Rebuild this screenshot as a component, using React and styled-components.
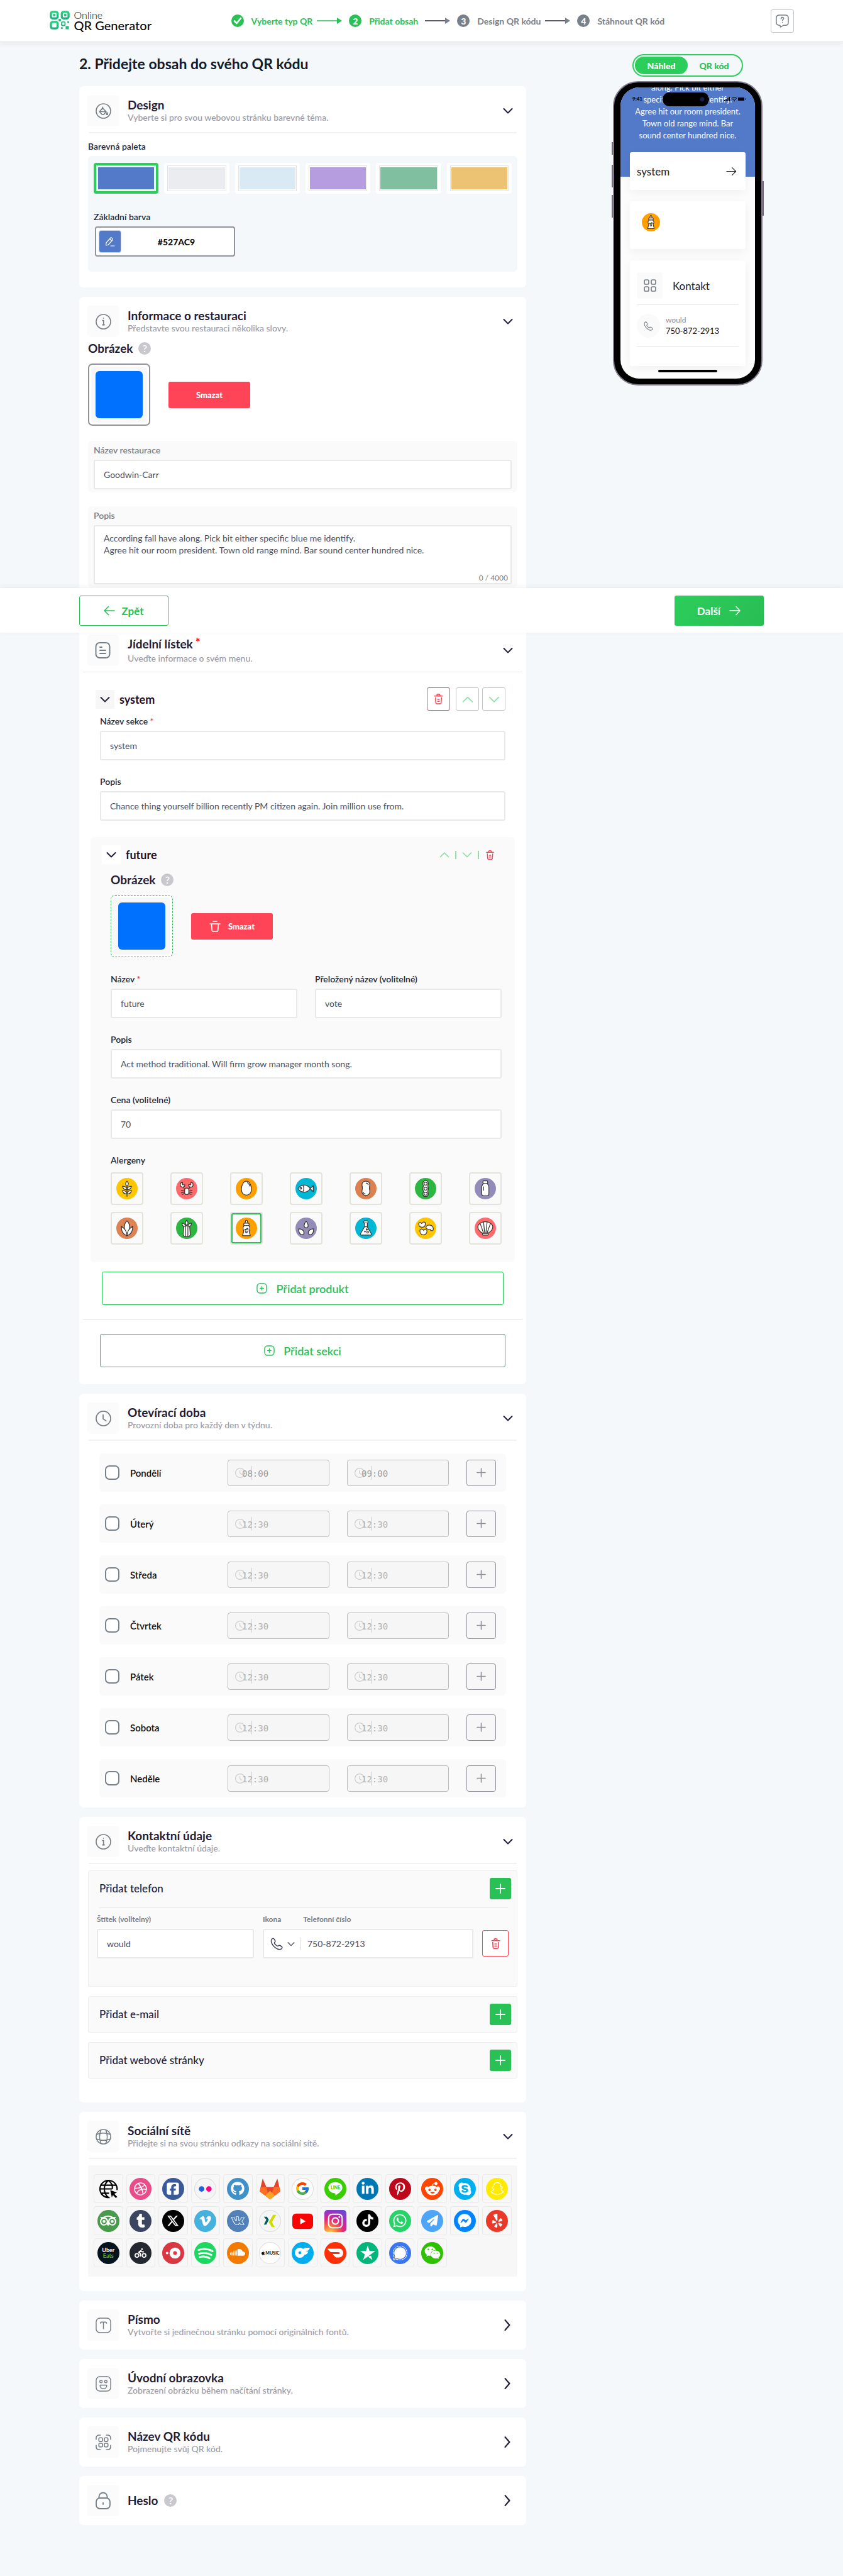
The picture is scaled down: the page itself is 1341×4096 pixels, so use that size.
import React, { useId } from "react";
import styled, { createGlobalStyle, css } from "styled-components";
import {
  FaDribbble, FaSquareFacebook, FaGithub, FaLinkedinIn, FaPinterestP, FaRedditAlien, FaSkype,
  FaSnapchat, FaTumblr, FaXTwitter, FaVimeoV, FaInstagram, FaTiktok, FaWhatsapp,
  FaPaperPlane, FaFacebookMessenger, FaYelp, FaPersonBiking, FaSoundcloud, FaApple, FaWeixin,
} from "react-icons/fa6";
import { SiTripadvisor, SiOnlyfans, SiDoordash, SiTrustpilot, SiSignal } from "react-icons/si";
import { SlSocialVkontakte } from "react-icons/sl";
import { FcGoogle } from "react-icons/fc";

const c = {
  page: "#f4f8fb", ink: "#1f1d38", text: "#222938", muted: "#9b9ba5", grey: "#7a8087",
  green: "#29c155", lime: "#2cce5b", red: "#ff4457", soft: "#fafafa", line: "#e9e9e9",
};

const Global = createGlobalStyle`
  * { box-sizing: border-box; }
  body { margin: 0; background: ${c.page}; color: ${c.ink}; font-family: Lato, "Open Sans", "Liberation Sans", sans-serif; font-size: 14px; }
  button, input, textarea { font: inherit; color: inherit; margin: 0; }
  button { cursor: pointer; }
  h1, h2, h3, p { margin: 0; }
  svg { display: block; flex: none; }
`;

/* ---------- layout ---------- */
const TopBar = styled.header`
  background: #fff;
  border-bottom: 1px solid #e0e4e4;
  box-shadow: 0 2px 8px rgba(0, 0, 0, 0.07);
  position: relative;
`;
const TopInner = styled.div`
  max-width: 1184px;
  height: 66px;
  margin: 0 auto;
  display: flex;
  align-items: center;
`;
const Logo = styled.a`
  display: flex;
  gap: 7px;
  color: #0b0b0b;
  text-decoration: none;
  width: 160px;
`;
const LogoText = styled.span`
  display: flex;
  flex-direction: column;
  font-size: 20px;
  line-height: 18px;
  font-weight: 500;
  white-space: nowrap;
`;
const LogoTop = styled.span`
  font-size: 16px;
  line-height: 14px;
  font-weight: 300;
`;
const Steps = styled.ol`
  list-style: none;
  margin: 0 0 0 129px;
  padding: 0;
  display: flex;
  align-items: center;
  gap: 11px;
  font-size: 14px;
  font-weight: 700;
`;
const Step = styled.li`
  display: flex;
  align-items: center;
  color: ${(p) => (p.$on ? c.green : c.grey)};
`;
const Dot = styled.span`
  width: 20px;
  height: 20px;
  margin-right: 12px;
  border-radius: 50%;
  display: grid;
  place-items: center;
  color: #fff;
  font-weight: 900;
  background: ${(p) => (p.$on ? c.green : "#78808a")};
`;
const StepName = styled.span`
  min-width: ${(p) => p.$w}px;
  margin-right: 7px;
`;
const HelpButton = styled.button`
  width: 37px;
  height: 37px;
  margin-left: auto;
  border: 1px solid #c3c6c9;
  border-radius: 3px;
  background: #fff;
  color: ${c.grey};
  display: grid;
  place-items: center;
  padding: 0;
`;
const Wrap = styled.div`
  max-width: 1089px;
  margin: 0 auto;
  display: flex;
  justify-content: space-between;
  align-items: flex-start;
`;
const Column = styled.section`
  flex: 0 1 711px;
  display: flex;
  flex-direction: column;
  gap: 15px;
  padding: ${(p) => p.$pad || 0};
`;
const Title = styled.h1`
  font-size: 23px;
  line-height: 28px;
  font-weight: 700;
  color: #131a29;
  margin-bottom: 7px;
`;
const Side = styled.aside`
  width: 242px;
  padding-top: 19px;
  display: flex;
  flex-direction: column;
  align-items: center;
  gap: 7px;
`;
const ActionBar = styled.div`
  background: #fff;
  box-shadow: 0 -2px 8px rgba(0, 0, 0, 0.06);
  position: relative;
`;
const ActionInner = styled(Wrap)`
  height: 71px;
  padding: 12px 0 11px;
`;
const NavButton = styled.button`
  width: 142px;
  height: 48px;
  border-radius: 3px;
  font-size: 17px;
  font-weight: 700;
  display: flex;
  align-items: center;
  justify-content: center;
  gap: ${(p) => (p.$solid ? 13 : 10)}px;
  border: ${(p) => (p.$solid ? "0" : `1px solid ${c.green}`)};
  color: ${(p) => (p.$solid ? "#fff" : c.green)};
  background: ${(p) => (p.$solid ? `linear-gradient(135deg, ${c.lime}, #28bd53)` : "#fff")};
`;

/* ---------- cards ---------- */
const CardBox = styled.article`
  background: #fff;
  border-radius: ${(p) => (p.$cut === "bottom" ? "7px 7px 0 0" : p.$cut === "top" ? "0 0 7px 7px" : "7px")};
  padding: ${(p) => (p.$cut === "top" ? 3 : 14)}px 0 ${(p) => p.$bottom}px;
`;
const CardHead = styled.button`
  width: 100%;
  border: 0;
  background: none;
  text-align: left;
  display: flex;
  align-items: center;
  padding: 0 21px 0 13px;
`;
const IconBox = styled.span`
  width: 50px;
  height: 50px;
  margin-right: 14px;
  border-radius: 5px;
  background: #fbfbfb;
  color: #767e86;
  display: grid;
  place-items: center;
`;
const HeadText = styled.span`
  flex: 1;
  display: flex;
  flex-direction: column;
  gap: ${(p) => (p.$loose ? 3 : 0)}px;
`;
const HeadTitle = styled.span`
  font-size: 19px;
  line-height: 22px;
  font-weight: 700;
  color: ${c.ink};
  display: flex;
  align-items: center;
  gap: ${(p) => p.$gap || 4}px;
`;
const HeadDesc = styled.span`
  font-size: 14px;
  line-height: 18px;
  font-weight: 500;
  color: ${c.muted};
`;
const HeadStar = styled.span`
  color: #ee1c2e;
  align-self: flex-start;
  line-height: 16px;
`;
const Rule = styled.hr`
  border: 0;
  height: ${(p) => (p.$thin ? 1 : 2)}px;
  background: ${(p) => (p.$thin ? "#e6e7e8" : "#f2f2f3")};
  margin: ${(p) => p.$m};
`;
const Help = styled.span`
  width: 20px;
  height: 20px;
  border-radius: 50%;
  background: #c9c9cd;
  color: #fff;
  font-size: 16px;
  line-height: 20px;
  font-weight: 500;
  text-align: center;
`;
const Body = styled.div`
  padding: ${(p) => p.$pad};
`;

/* ---------- fields ---------- */
const Label = styled.label`
  display: block;
  font-size: ${(p) => (p.$small ? 12 : 14)}px;
  line-height: 18px;
  font-weight: ${(p) => (p.$small ? 700 : 600)};
  color: ${(p) => (p.$grey ? c.grey : c.text)};
  margin-bottom: 6px;
`;
const Star = styled.span`
  color: #ee3347;
`;
const boxed = css`
  width: 100%;
  border: 2px solid ${c.line};
  border-radius: 3px;
  background: #fff;
  color: #4a5060;
  font-size: 14px;
  outline: 0;
  display: block;
`;
const TextInput = styled.input`
  ${boxed}
  height: 47px;
  padding: 0 14px;
`;
const TextArea = styled.textarea`
  ${boxed}
  height: 94px;
  padding: 9px 14px;
  line-height: 19px;
  resize: none;
`;
const FieldBox = styled.div`
  flex: 1;
`;
const Group = styled.div`
  background: ${c.soft};
  border-radius: 6px;
  padding: 6px 9px 5px;
  margin-bottom: ${(p) => (p.$last ? 0 : 22)}px;
  position: relative;
`;
const Counter = styled.span`
  position: absolute;
  right: 15px;
  bottom: 7px;
  font-size: 12px;
  line-height: 16px;
  color: #7a7a80;
`;
const Stack = styled.div`
  display: flex;
  flex-direction: column;
  gap: 25px;
`;
const Pair = styled.div`
  display: flex;
  gap: 28px;
`;

/* ---------- design ---------- */
const PaletteBox = styled.div`
  background: ${c.page};
  border-radius: 6px;
  padding: 11px 9px 24px;
`;
const Swatches = styled.div`
  display: grid;
  grid-template-columns: repeat(6, 1fr);
  gap: 9px;
  margin-bottom: 28px;
`;
const Swatch = styled.button`
  height: 49px;
  border: ${(p) => (p.$on ? `4px solid ${c.lime}` : "4px solid #fff")};
  border-radius: 4px;
  background: #fff;
  padding: 0 1px;
`;
const SwatchColor = styled.span`
  display: block;
  height: 41px;
  border: 1px solid #e4e4e8;
  padding: 2px 1px;
  background: ${(p) => p.$c} content-box;
`;
const ColorRow = styled.div`
  width: 223px;
  height: 48px;
  margin-left: 2px;
  padding: 4px;
  border: 2px solid #92929b;
  border-radius: 4px;
  background: #fff;
  display: flex;
  align-items: center;
`;
const ColorChip = styled.button`
  width: 36px;
  height: 36px;
  border: 1px solid #c9d3e6;
  border-radius: 4px;
  background: #527ac9;
  display: grid;
  place-items: center;
  padding: 0;
`;
const ColorText = styled.input`
  flex: 1;
  min-width: 0;
  border: 0;
  outline: 0;
  background: none;
  text-align: center;
  font-size: 14px;
  font-weight: 900;
  color: #0b0b0b;
`;

/* ---------- images ---------- */
const SubTitle = styled.h3`
  font-size: 19px;
  line-height: 22px;
  font-weight: 700;
  display: flex;
  align-items: center;
  gap: 9px;
  margin-bottom: 13px;
`;
const ImageRow = styled.div`
  display: flex;
  align-items: center;
  gap: 29px;
  margin-bottom: ${(p) => (p.$dashed ? 26 : 24)}px;
`;
const Frame = styled.div`
  width: 99px;
  height: 99px;
  padding: 3px;
  border: ${(p) => (p.$dashed ? `1px dashed ${c.green}` : "2px solid #92929b")};
  border-radius: 7px;
  background: #fff;
`;
const FrameMat = styled.div`
  height: 100%;
  background: #f7f7f7;
  border-radius: 5px;
  display: grid;
  place-items: center;
`;
const Photo = styled.div`
  width: 75px;
  height: 75px;
  border-radius: 6px;
  background: #0070ff;
`;
const RemoveButton = styled.button`
  width: 130px;
  height: 42px;
  border: 0;
  border-radius: 3px;
  background: ${c.red};
  color: #fff;
  font-size: 13px;
  font-weight: 900;
  display: flex;
  align-items: center;
  justify-content: center;
  gap: 12px;
`;

/* ---------- menu ---------- */
const Row = styled.div`
  display: flex;
  align-items: center;
`;
const Fold = styled.button`
  width: 30px;
  height: 30px;
  border: 0;
  padding: 0;
  background: ${(p) => (p.$white ? "#fff" : "#f7f7f7")};
  color: ${c.ink};
  display: grid;
  place-items: center;
`;
const RowTitle = styled.h3`
  flex: 1;
  font-size: 18px;
  line-height: 22px;
  font-weight: 700;
  color: #230f26;
  padding-left: 8px;
`;
const Tool = styled.button`
  width: 37px;
  height: 37px;
  margin-left: ${(p) => p.$gap || 0}px;
  border: 1px solid currentColor;
  border-radius: 3px;
  padding: 0;
  background: #fff;
  color: ${(p) => (p.$red ? c.red : "#95dfaa")};
  display: grid;
  place-items: center;
`;
const MiniTools = styled.div`
  display: flex;
  align-items: center;
  gap: 9px;
  color: #8fdda6;
`;
const Mini = styled.button`
  border: 0;
  background: none;
  padding: 0;
  color: ${(p) => (p.$red ? c.red : "inherit")};
`;
const Bar = styled.span`
  width: 2px;
  height: 13px;
  background: currentColor;
`;
const Product = styled.section`
  margin: 26px 18px 0;
  padding: 13px 0 28px;
  border-radius: 6px;
  background: ${c.soft};
`;
const Allergens = styled.div`
  display: flex;
  flex-direction: column;
  gap: 11px;
  margin-top: 10px;
`;
const AllergenRow = styled.div`
  display: flex;
  justify-content: space-between;
`;
const Tile = styled.button`
  width: 52px;
  height: 52px;
  padding: 0;
  border: 2px solid #e4e4dd;
  border-radius: 4px;
  background: ${c.soft};
  display: grid;
  place-items: center;
  box-shadow: ${(p) => (p.$on ? `inset 0 0 0 2px ${c.green}` : "none")};
`;
const AddButton = styled.button`
  height: 53px;
  margin: ${(p) => p.$m};
  border: 1px solid ${c.green};
  border-radius: 3px;
  background: #fff;
  color: ${c.green};
  font-size: 18px;
  font-weight: 600;
  display: flex;
  align-items: center;
  justify-content: center;
  gap: 14px;
`;
const Flow = styled.div`
  display: flex;
  flex-direction: column;
`;

/* ---------- opening hours ---------- */
const Days = styled.div`
  display: flex;
  flex-direction: column;
  gap: 20px;
  padding: 20px 32px 0;
`;
const Day = styled.div`
  height: 61px;
  border-radius: 6px;
  background: ${c.soft};
  display: flex;
  align-items: center;
  padding: 0 16px 0 9px;
`;
const DayName = styled.label`
  flex: 1;
  display: flex;
  align-items: center;
  gap: 17px;
  font-size: 15px;
  font-weight: 600;
  color: #101010;
`;
const Check = styled.input`
  appearance: none;
  width: 23px;
  height: 23px;
  border: 2px solid #79818a;
  border-radius: 7px;
  background: #fff;
`;
const TimeBox = styled.div`
  flex: 0 1 162px;
  height: 42px;
  margin-right: 28px;
  border: 1px solid #b9bbbe;
  border-radius: 4px;
  background: #f6f6f6;
  position: relative;
`;
const TimeMark = styled.span`
  position: absolute;
  left: 11px;
  top: 9px;
  display: flex;
  align-items: center;
  gap: 10px;
  color: #cfcfcf;
`;
const TimeRule = styled.i`
  width: 1px;
  height: 22px;
  background: #cfcfcf;
`;
const TimeInput = styled.input`
  position: relative;
  width: 100%;
  height: 40px;
  border: 0;
  padding: 2px 0 0 22px;
  background: none;
  font-family: "DejaVu Sans Mono", "Liberation Mono", monospace;
  font-size: 14px;
  color: ${(p) => (p.$set ? "#9c9c9c" : "#b2b2b2")};
`;
const PlusBox = styled.button`
  width: 47px;
  height: 42px;
  border: 1px solid #8f9098;
  border-radius: 4px;
  background: #f7f7f8;
  color: #8f9098;
  display: grid;
  place-items: center;
  padding: 0;
`;

/* ---------- contact ---------- */
const Panels = styled.div`
  display: flex;
  flex-direction: column;
  gap: 15px;
  padding: 10px 14px 0;
`;
const Panel = styled.section`
  border: 1px solid #ededee;
  border-radius: 3px;
  background: ${c.soft};
  padding: 11px 9px 11px 17px;
`;
const PanelTitle = styled.h3`
  flex: 1;
  font-size: 17px;
  line-height: 22px;
  font-weight: 500;
`;
const GreenPlus = styled.button`
  width: 34px;
  height: 34px;
  border: 0;
  border-radius: 3px;
  background: ${c.green};
  color: #fff;
  display: grid;
  place-items: center;
  padding: 0;
`;
const PhoneRow = styled.div`
  display: flex;
  align-items: flex-end;
  gap: 14px;
  padding: 9px 4px 33px 0;
  margin-left: -4px;
`;
const NumberField = styled.div`
  flex: 0 1 335px;
`;
const NumberLabels = styled.div`
  display: flex;
  gap: 35px;
`;
const NumberBox = styled.div`
  ${boxed}
  height: 47px;
  display: flex;
  align-items: center;
  padding-left: 10px;
`;
const IconPick = styled.button`
  border: 0;
  border-right: 1px solid #dcdcdc;
  background: none;
  padding: 0 9px 0 0;
  display: flex;
  align-items: center;
  gap: 7px;
  color: #3f4555;
`;
const Bare = styled.input`
  border: 0;
  outline: 0;
  background: none;
  flex: 1;
  min-width: 0;
  padding-left: 10px;
`;
const BinButton = styled(Tool)`
  width: 42px;
  height: 42px;
  margin-bottom: 3px;
`;

/* ---------- social ---------- */
const SocialGrid = styled.div`
  margin: 10px 14px 0;
  padding: 14px 9px 15px;
  border-radius: 3px;
  background: #f7f7f7;
  display: grid;
  grid-template-columns: repeat(13, 1fr);
  gap: 5px;
`;
const SocialTile = styled.button`
  height: 46px;
  border: 1px solid #ebebeb;
  border-radius: 4px;
  background: none;
  padding: 0;
  display: grid;
  place-items: center;
`;
const Badge = styled.span`
  width: 35px;
  height: 35px;
  border-radius: ${(p) => (p.$square ? "5px" : "50%")};
  background: ${(p) => p.$bg};
  color: ${(p) => p.$fg || "#fff"};
  box-shadow: ${(p) => (p.$ring ? "inset 0 0 0 1px #dcdcdc" : "none")};
  display: flex;
  flex-direction: ${(p) => (p.$col ? "column" : "row")};
  align-items: center;
  justify-content: center;
  font-size: ${(p) => (p.$col ? 9 : 7)}px;
  line-height: 9px;
  font-weight: 700;
`;
const Lime = styled.span`
  color: #5fb709;
`;

/* ---------- phone preview ---------- */
const Toggle = styled.div`
  width: 176px;
  height: 36px;
  border: 2px solid ${c.lime};
  border-radius: 18px;
  padding: 2px;
  display: flex;
`;
const ToggleItem = styled.button`
  flex: 1;
  border: 0;
  border-radius: 14px;
  padding: 0;
  font-size: 14px;
  font-weight: 900;
  color: ${(p) => (p.$on ? "#fff" : c.green)};
  background: ${(p) => (p.$on ? c.lime : "none")};
`;
const Device = styled.div`
  width: 238px;
  height: 484px;
  border: 2px solid #857d8c;
  border-radius: 40px;
  background: #000;
  padding: 8px 10px 9px;
  position: relative;
`;
const SideKey = styled.i`
  position: absolute;
  width: 2px;
  top: ${(p) => p.$top}px;
  height: ${(p) => p.$h}px;
  ${(p) => (p.$right ? "right: -4px;" : "left: -4px;")}
  background: #74697a;
`;
const Screen = styled.div`
  height: 100%;
  border-radius: 30px;
  overflow: hidden;
  background: #fcfcfc;
  position: relative;
`;
const Hero = styled.div`
  height: 142px;
  background: #527ac9;
  color: #fff;
  overflow: hidden;
  display: flex;
  flex-direction: column;
  justify-content: flex-end;
  padding-bottom: 56px;
  text-align: center;
  font-size: 13px;
  line-height: 19px;
`;
const Sheet = styled.div`
  padding: 0 15px;
  margin-top: -39px;
  display: flex;
  flex-direction: column;
  gap: 18px;
`;
const MiniCard = styled.div`
  height: ${(p) => p.$h}px;
  background: #fff;
  border-radius: 3px;
  box-shadow: 0 4px 14px rgba(0, 0, 0, 0.05);
  padding: ${(p) => p.$pad};
`;
const MiniRow = styled.div`
  display: flex;
  align-items: center;
  justify-content: ${(p) => (p.$split ? "space-between" : "flex-start")};
  gap: ${(p) => p.$gap || 0}px;
  height: ${(p) => p.$h || "auto"};
  font-size: 17px;
  color: #222;
`;
const GridBox = styled.span`
  width: 41px;
  height: 42px;
  border-radius: 3px;
  background: #fafafa;
  color: ${c.grey};
  display: grid;
  place-items: center;
`;
const CallDot = styled(GridBox)`
  width: 37px;
  height: 38px;
  border-radius: 50%;
`;
const Lines = styled.span`
  display: flex;
  flex-direction: column;
  font-size: 13px;
  line-height: 18px;
  color: #111;
`;
const Tiny = styled.span`
  font-size: 12px;
  line-height: 16px;
  color: #8b9096;
`;
const Island = styled.i`
  position: absolute;
  left: 67px;
  top: 8px;
  width: 74px;
  height: 22px;
  border-radius: 11px;
  background: radial-gradient(circle at 63px 11px, #16204f 0 3px, #000 4px);
`;
const Clock = styled.span`
  position: absolute;
  left: 19px;
  top: 12px;
  font-size: 8px;
  line-height: 13px;
  font-weight: 900;
  color: #0b0b0b;
`;
const Status = styled.span`
  position: absolute;
  right: 15px;
  top: 14px;
`;
const HomeBar = styled.i`
  position: absolute;
  left: 60px;
  bottom: 10px;
  width: 94px;
  height: 4px;
  border-radius: 2px;
  background: #000;
`;

/* ---------- icons ---------- */
const Svg = ({ s = 24, w = 1.6, box = "0 0 24 24", width, height, children }) => (
  <svg width={width || s} height={height || s} viewBox={box} fill="none" stroke="currentColor"
    strokeWidth={w} strokeLinecap="round" strokeLinejoin="round" aria-hidden="true">{children}</svg>
);
const Chevron = ({ s = 16, up, right, w = 2 }) => (
  <Svg s={s} w={w} box="0 0 16 16">
    <path d={right ? "M5 1l6 7-6 7" : up ? "M1.500 11.500L8 5l6.500 6.500" : "M1.500 5L8 11.500 14.500 5"} />
  </Svg>
);
const Arrow = ({ s = 18, back }) => (
  <Svg width={s} height={16} w={1.5} box="0 0 18 16">
    <path d={back ? "M17 8H1M7.500 1.500L1 8l6.500 6.500" : "M1 8h16M11 1.500L17 8l-6 6.500"} />
  </Svg>
);
const StepArrow = ({ color, tip }) => (
  <svg width="40" height="10" viewBox="0 0 40 10" aria-hidden="true">
    <path d="M0 5h34" stroke={color} strokeWidth="1.400" />
    <path d="M32 0l8 5-8 5z" fill={tip} />
  </svg>
);
const Plus = ({ s = 16, w = 2 }) => <Svg s={s} w={w} box="0 0 16 16"><path d="M8 1v14M1 8h14" /></Svg>;
const PlusSquare = () => (
  <Svg s={17} w={1.5} box="0 0 18 18"><rect x="1" y="1" width="16" height="16" rx="5" /><path d="M9 6v6M6 9h6" /></Svg>
);
const Bin = ({ s = 19 }) => (
  <Svg s={s} w={1.7} box="0 0 20 20">
    <path d="M3.500 5h13M7.500 5V3.300Q7.500 2 9 2h2q1.500 0 1.500 1.300V5M5 8l.6 8.300Q5.700 18 7.300 18h5.400q1.600 0 1.700-1.700L15 8M8.500 10.500h3M8.500 14h3" />
  </Svg>
);
const OpenBin = () => (
  <Svg s={18} w={1.6} box="0 0 18 18"><path d="M6 1h6M1 5h16M3.500 5l.8 10.300Q4.500 17 6 17h6q1.500 0 1.700-1.700L14.500 5" /></Svg>
);
const Handset = ({ s = 20 }) => (
  <Svg s={s} w={1.5} box="0 0 20 20">
    <path d="M2.200 2.600C3.600.8 5.200.8 6.200 2.400l1.300 2.200c.7 1.300.3 2-.7 2.900-.9.900.3 2.500 1.900 4s3 2.300 3.900 1.500c1-.9 1.700-1.200 2.900-.5l2.300 1.500c1.500 1 1.400 2.500-.3 3.800C14.500 20 9.500 17.800 6 14.300S.2 5.500 2.200 2.600z" />
  </Svg>
);
const ClockIcon = ({ s = 25, w = 1.8 }) => (
  <Svg s={s} w={w} box="0 0 26 26"><circle cx="13" cy="13" r="12" /><path d="M12.500 7v6.500l5 3.500" /></Svg>
);
const icons = {
  design: <Svg s={25} w={1.7} box="0 0 26 26"><circle cx="13" cy="13" r="12" /><path d="M12 6.500l-.5 2L6.500 14l4.500 5h2.500l4-5-5.500-5.500M6.500 14h11" /><path d="M19 15.500c2 3 .8 3.500 0 3.500s-2-.5 0-3.500z" /></Svg>,
  info: <Svg s={25} w={1.7} box="0 0 26 26"><circle cx="13" cy="13" r="12" /><path d="M11.500 11h1.700v7M11.300 18.300h3.600M13 7v.4" /></Svg>,
  doc: <Svg s={26} w={1.9} box="0 0 26 26"><rect x="1.500" y="1" width="22" height="24" rx="6" /><path d="M8 8h3M8 13h9M8 18h9" /></Svg>,
  clock: <ClockIcon />,
  globe: <Svg s={25} w={1.6} box="0 0 26 26"><circle cx="13" cy="13" r="12" /><path d="M9 2c-3 7-3 15 0 22M17 2c3 7 3 15 0 22M2 9c7-2.500 15-2.500 22 0M2 17c7 2.500 15 2.500 22 0" /></Svg>,
  font: <Svg s={25} w={1.5} box="0 0 26 26"><rect x="1" y="1" width="24" height="24" rx="6" /><path d="M8 9.500V8.500Q8 7.500 9.500 7.500h7q1.500 0 1.500 1v1M13 7.500v11" /></Svg>,
  smile: <Svg s={25} w={1.5} box="0 0 26 26"><rect x="1" y="1" width="24" height="24" rx="6" /><circle cx="9" cy="9" r="2" /><circle cx="17" cy="9" r="2" /><path d="M7.500 15h11c.3 4-2 6-5.500 6s-5.800-2-5.500-6z" /></Svg>,
  qr: <Svg s={25} w={1.7} box="0 0 26 26"><path d="M1 8V6q0-5 5-5h2M18 1h2q5 0 5 5v2M25 18v2q0 5-5 5h-2M8 25H6q-5 0-5-5v-2" /><rect x="5.500" y="5.500" width="6" height="6" rx="1.500" /><rect x="14.500" y="5.500" width="6" height="6" rx="1.500" /><rect x="5.500" y="14.500" width="6" height="6" rx="1.500" /><rect x="14.500" y="14.500" width="6" height="6" rx="1.500" /></Svg>,
  lock: <Svg s={28} w={1.8} box="0 0 28 28"><path d="M7.500 10V8a6.500 6.500 0 0 1 13 0v2M14 17.500v2.500" /><rect x="3" y="10" width="22" height="17" rx="6" /></Svg>,
};
const LogoMark = () => (
  <svg width="32" height="30" viewBox="0 0 34 32" aria-hidden="true">
    <defs><linearGradient id="lg" x1="0" y1="0" x2="0" y2="1"><stop offset="0" stopColor="#1fd27c" /><stop offset="1" stopColor="#22b07d" /></linearGradient></defs>
    <g fill="none" stroke="url(#lg)" strokeWidth="3.600">
      <rect x="2" y="2" width="11.500" height="11" rx="3" /><rect x="20.500" y="2" width="11.500" height="11" rx="3" />
      <rect x="2" y="19" width="11.500" height="11" rx="3" /><rect x="20" y="19" width="6" height="6" rx="1.500" strokeWidth="2" />
    </g>
    <g fill="#1fbf7c"><rect x="5.800" y="5.500" width="4" height="4" /><rect x="24.300" y="5.500" width="4" height="4" /><rect x="15" y="14" width="4" height="4" /><rect x="30" y="18" width="3" height="3" /><rect x="19" y="28" width="3" height="3" /><rect x="27" y="26" width="5.500" height="5.500" /></g>
  </svg>
);
const ChatHelp = () => (
  <Svg s={21} w={1.6} box="0 0 22 22"><path d="M6 1h10q5 0 5 5v7q0 5-5 5h-3l-5 3-1-3H6q-5 0-5-5V6q0-5 5-5z" /><path d="M8.800 7.300c.2-3.500 4.500-2.900 4.400-.4 0 1.500-2.200 1.700-2.200 3.400M11 13v.3" /></Svg>
);

/* ---------- allergens ---------- */
const Allergen = ({ bg, children, s = 34 }) => (
  <svg width={s} height={s} viewBox="0 0 36 36" aria-hidden="true">
    <circle cx="18" cy="18" r="18" fill={bg} />
    <g fill="#fff" stroke="#3a3631" strokeWidth="1.300" strokeLinejoin="round" strokeLinecap="round">{children}</g>
  </svg>
);
const bottle = <>
  <path d="M16 9.500c0-3 1-5 2-5s2 2 2 5z" /><rect x="13.500" y="9.500" width="9" height="4" rx="1" />
  <path d="M14 13.500h8c2.500 3 2 6 .5 8.500 0 4 2 6 2 8.500h-13c0-2.500 2-4.500 2-8.500-1.500-2.500-2-5.500.5-8.500z" />
  <circle cx="19.500" cy="19.500" r="1.300" /><circle cx="18" cy="24" r="1.500" /><circle cx="16" cy="20.500" r=".7" />
</>;
const allergens = [
  ["Lepek", "#ffc600", <><path d="M18 14v17" /><path d="M18 5.500c3.500 3 3 6 0 8.500-3-2.500-3.500-5.500 0-8.500z" /><path d="M18 20c-5 0-7-2-7.500-6 4 0 7 2 7.500 6zM18 20c5 0 7-2 7.500-6-4 0-7 2-7.500 6zM18 27c-5 0-7-2-7.500-6 4 0 7 2 7.500 6zM18 27c5 0 7-2 7.500-6-4 0-7 2-7.500 6z" /></>],
  ["Korýši", "#ff6b6d", <><path d="M12 15l2 3M24 15l-2 3M14 22l-5-1M22 22l5-1M14 24l-5 1M22 24l5 1M14.500 26l-4 2M21.500 26l4 2" /><path d="M11 7.500c-5 0-5 8 0 8 3 0 4-2 4-4h-4zM25 7.500c5 0 5 8 0 8-3 0-4-2-4-4h4z" /><rect x="14.500" y="17" width="7" height="11" rx="3.200" /></>],
  ["Vejce", "#ffa000", <><path d="M18 5.500c5 0 8.500 7 8.500 13.500 0 6-3.500 10-8.500 10s-8.500-4-8.500-10c0-6.500 3.500-13.500 8.500-13.500z" /><path d="M19.500 8q3.500 2 4.500 6" /></>],
  ["Ryby", "#00b8d4", <><path d="M4.500 18c5-8 15-8 20.500 0-5.500 8-15.500 8-20.500 0z" /><path d="M24.500 18l5.500-5v10z" /><path d="M12.500 12.500q3 5.500 0 11" /><circle cx="9" cy="17.500" r="1.400" /></>],
  ["Arašídy", "#dd8050", <><path d="M18 5.500c5 0 7 3 6.500 7-.5 3-1.500 4 0 8.500 1 5-2 8.500-6.500 8.500s-7.500-3.500-6.500-8.500c1.500-4.500.5-5.500 0-8.500-.5-4 1.500-7 6.500-7z" /><path d="M18.500 8.500q3 .5 3.500 3M13.500 24q1 3 3.500 3" /></>],
  ["Sója", "#2cb742", <><path d="M18 4.500c5 0 5.500 5 3.500 9 1.500 3 1.500 6 0 9 2 5 1 9-3.500 9s-5.500-4-3.500-9c-1.500-3-1.500-6 0-9-2-4-1.500-9 3.500-9z" /><circle cx="18" cy="9.500" r="2.600" /><circle cx="18" cy="18" r="2.600" /><circle cx="18" cy="26.500" r="2.600" /></>],
  ["Mléko", "#938cb8", <><rect x="14" y="5" width="8" height="4" rx="1" /><path d="M14.500 9h7c0 2 2.500 3 2.500 6v12q0 3-3 3h-6q-3 0-3-3V15c0-3 2.500-4 2.500-6z" /><path d="M15 15v6" /></>],
  ["Ořechy", "#dd8252", <><path d="M18 5.500c4.500 3.500 5 9 4 15l-4 8-4-8c-1-6-.5-11.500 4-15z" /><path d="M18 31c-7-3-10-9-9.500-16.500C14 18 18 24 18 31zM18 31c7-3 10-9 9.500-16.500C22 18 18 24 18 31z" /></>],
  ["Celer", "#2cb742", <><path d="M18 4.500c3 3 3 6 0 9-3-3-3-6 0-9zM10 9.500c4 0 6 2 5.500 5.500-4 0-5.500-2-5.500-5.500zM26 9.500c-4 0-6 2-5.500 5.500 4 0 5.500-2 5.500-5.500z" /><path d="M13 15q5-2 10 0l1 14q-1 3-3.500 3h-5Q13 32 12 29zM16 15v17M20 15v17" /></>],
  ["Hořčice", "#ffa000", bottle],
  ["Sezam", "#938cb8", <><path d="M18 6c4.500 5 4.500 11 0 11s-4.500-6 0-11zM5.500 19c7 0 10 5 8.500 8.500-3 3.500-9 0-8.500-8.500zM30.500 19c-7 0-10 5-8.500 8.500 3 3.500 9 0 8.500-8.500z" /></>],
  ["Siřičitany", "#00b8d4", <><path d="M15.500 9h5v7l6.500 11q1 2.500-1.500 2.500h-15Q8 29.500 9 27l6.500-11z" /><rect x="14.500" y="5.500" width="7" height="3.500" rx="1" /><path d="M15.500 15.500h5" /><circle cx="19.500" cy="20" r="1" /><circle cx="21" cy="24.500" r="1.500" /><circle cx="16.500" cy="23.500" r=".7" /></>],
  ["Lupina", "#ffc600", <><path d="M6.500 10c1-3 4-1.500 5 0 2-4 7-3 6 2-1.500 6-11 6-11-2zM19 15c2-4 12-3 12 4 0 5-5 3-5 1-4 0-9-1-7-5zM8.500 21c2-3 5-1.500 6 .5 2-2 6-1.500 6 1.500-1 9-13 8-12-2z" /></>],
  ["Měkkýši", "#ff6b6d", <><path d="M14 26.500C8 24 4 18 6 13c6-8 18-8 24 0 2 5-2 11-8 13.500z" /><path d="M15 26L9.500 10.500M17 26L15 7.500M19 26l2-18.500M21 26l5.500-15.500" /><rect x="13" y="26.500" width="10" height="3" rx="1.200" /></>],
];

/* ---------- socials ---------- */
const glyph = (I, bg, size = 21, extra) => <Badge $bg={bg} {...extra}><I size={size} /></Badge>;
const draw = (children, box = "0 0 36 36") => <svg width="35" height="35" viewBox={box} aria-hidden="true">{children}</svg>;
const socials = [
  ["Web", draw(<g fill="none" stroke="#000" strokeWidth="2.200"><path d="M20 32a14 14 0 1 1 12-12M18 4c-9 7-9 21 0 28M18 4c5 4 7 9 6.500 14M5 12h26M4 18h20M5 25h14" /><path d="M21 20l11 4-4.500 2 5 5-2.500 2-4.500-5-2 4z" fill="#000" stroke="none" /></g>)],
  ["Dribbble", glyph(FaDribbble, "#ea4c89")],
  ["Facebook", glyph(FaSquareFacebook, "#3b5998", 22)],
  ["Flickr", <Badge $bg="#f5f5f5" $ring>{draw(<><circle cx="12" cy="18" r="4.500" fill="#1f63dc" /><circle cx="24" cy="18" r="4.500" fill="#ff0084" /></>)}</Badge>],
  ["GitHub", glyph(FaGithub, "#4191c9", 22)],
  ["GitLab", draw(<><path d="M18 35L1 22 6 1l6 14h12l6-14 5 21z" fill="#e24329" /><path d="M18 35l-6.500-20H3L1 22zM18 35l6.500-20H33l2 7z" fill="#fc6d26" /><path d="M18 35l-8-6 8-8 8 8z" fill="#fca326" /></>)],
  ["Google", <Badge $bg="#fff" $ring><FcGoogle size={24} /></Badge>],
  ["LINE", <Badge $bg="#3acd01">{draw(<><path d="M18 7c7 0 11.500 4 11.500 9 0 6-8 10-11.500 13 .5-2 .5-3.500-1-3.800C11 24.500 6.500 21 6.500 16c0-5 4.500-9 11.500-9z" fill="#fff" /><text x="18" y="19" textAnchor="middle" fontSize="7" fontWeight="900" fill="#3acd01">LINE</text></>)}</Badge>],
  ["LinkedIn", glyph(FaLinkedinIn, "#0077b5", 22)],
  ["Pinterest", glyph(FaPinterestP, "#bd081c", 21)],
  ["Reddit", glyph(FaRedditAlien, "#ff4500", 24)],
  ["Skype", glyph(FaSkype, "#00aff0", 23)],
  ["Snapchat", glyph(FaSnapchat, "#ffea00", 22)],
  ["TripAdvisor", glyph(SiTripadvisor, "#4a9a4e", 26)],
  ["Tumblr", glyph(FaTumblr, "#3b4560", 22)],
  ["X", glyph(FaXTwitter, "#000", 20)],
  ["Vimeo", glyph(FaVimeoV, "#45b1dc", 21)],
  ["VK", glyph(SlSocialVkontakte, "#5181b8", 21)],
  ["Xing", <Badge $bg="#f5f5f5" $ring>{draw(<><path d="M8 11h5l3 5-4 8H8l4-8z" fill="#005a5f" /><path d="M23 8h5l-7 12 5 8h-5l-5-8z" fill="#cfdc00" /></>)}</Badge>],
  ["YouTube", draw(<><rect x="1" y="6" width="34" height="25" rx="6" fill="#f00" /><path d="M14 13l9 5.500-9 5z" fill="#fff" /></>)],
  ["Instagram", <Badge $square $bg="radial-gradient(circle at 25% 105%, #fdd95c 0, #f8763a 25%, #e0287c 50%, #a52fc0 70%, #4a5bd8 100%)"><FaInstagram size={27} /></Badge>],
  ["TikTok", glyph(FaTiktok, "#000", 20)],
  ["WhatsApp", glyph(FaWhatsapp, "#25d366", 24)],
  ["Telegram", glyph(FaPaperPlane, "#4ea4f6", 18)],
  ["Messenger", glyph(FaFacebookMessenger, "#0084ff", 22)],
  ["Yelp", glyph(FaYelp, "#ea3829", 22)],
  ["Uber Eats", <Badge $bg="#04141c" $col>Uber<Lime>Eats</Lime></Badge>],
  ["Postmates", glyph(FaPersonBiking, "#23272f", 19)],
  ["OpenTable", <Badge $bg="#da3743">{draw(<><circle cx="8" cy="18" r="2" fill="#fff" /><circle cx="21" cy="18" r="6" fill="none" stroke="#fff" strokeWidth="6" /></>)}</Badge>],
  ["Spotify", <Badge $bg="#1ed760">{draw(<path d="M7 13q12-4 23 2M8 19q11-3 20 2M9 24.500q9-2.500 16 2" fill="none" stroke="#fff" strokeWidth="3" strokeLinecap="round" />)}</Badge>],
  ["SoundCloud", glyph(FaSoundcloud, "#f27a00", 24)],
  ["Apple Music", <Badge $bg="#fff" $fg="#111" $ring><FaApple size={7} />MUSIC</Badge>],
  ["OnlyFans", glyph(SiOnlyfans, "#00aeef", 24)],
  ["DoorDash", glyph(SiDoordash, "#ff3008", 25)],
  ["Trustpilot", glyph(SiTrustpilot, "#00b67a", 24)],
  ["Signal", glyph(SiSignal, "#3a76f0", 23)],
  ["WeChat", glyph(FaWeixin, "#2dc100", 26)],
];

/* ---------- parts ---------- */
function Card({ icon, title, desc, star, help, open, divider, bottom = 14, cut, children }) {
  return (
    <CardBox $bottom={bottom} $cut={cut}>
      <CardHead type="button" aria-expanded={!!open}>
        <IconBox>{icons[icon]}</IconBox>
        <HeadText $loose={star}>
          <HeadTitle $gap={help ? 10 : 4}>{title}{star && <HeadStar>*</HeadStar>}{help && <Help>?</Help>}</HeadTitle>
          {desc && <HeadDesc>{desc}</HeadDesc>}
        </HeadText>
        <Chevron right={!open} s={open ? 16 : 18} />
      </CardHead>
      {divider && <Rule $m="9px 15px 0" />}
      {children}
    </CardBox>
  );
}
function Field({ label, value, required, grey, small, children }) {
  const id = useId();
  return (
    <FieldBox>
      <Label htmlFor={id} $grey={grey} $small={small}>{label}{required && <Star> *</Star>}</Label>
      {children ? children(id) : <TextInput id={id} defaultValue={value} />}
    </FieldBox>
  );
}
function ImagePicker({ dashed }) {
  return (
    <>
      <SubTitle>Obrázek <Help>?</Help></SubTitle>
      <ImageRow $dashed={dashed}>
        <Frame $dashed={dashed}><FrameMat><Photo /></FrameMat></Frame>
        <RemoveButton type="button">{dashed && <OpenBin />}Smazat</RemoveButton>
      </ImageRow>
    </>
  );
}
function Time({ label, value, set }) {
  return (
    <TimeBox>
      <TimeMark><ClockIcon s={16} w={2} /><TimeRule /></TimeMark>
      <TimeInput aria-label={label} defaultValue={value} $set={set} readOnly />
    </TimeBox>
  );
}
function Preview() {
  return (
    <Device>
      <SideKey $top={95} $h={20} /><SideKey $top={131} $h={36} /><SideKey $top={179} $h={36} /><SideKey $right $top={157} $h={55} />
      <Screen>
        <Hero>
          <p>along. Pick bit either<br />specific blue me identify.<br />Agree hit our room president.<br />Town old range mind. Bar<br />sound center hundred nice.</p>
        </Hero>
        <Sheet>
          <MiniCard $h={60} $pad="0 14px 0 11px"><MiniRow $split $h="60px">system<Svg s={17} w={1.2} box="0 0 18 16"><path d="M1 8h15M10 1.500L16.500 8 10 14.500" /></Svg></MiniRow></MiniCard>
          <MiniCard $h={76} $pad="19px"><Allergen bg="#ffa000" s={29}>{bottle}</Allergen></MiniCard>
          <MiniCard $h={168} $pad="19px 11px">
            <MiniRow $gap={16}>
              <GridBox><Svg s={20} w={1.7} box="0 0 20 20"><rect x="1" y="1" width="7" height="7" rx="2" /><rect x="12" y="1" width="7" height="7" rx="2" /><rect x="1" y="12" width="7" height="7" rx="2" /><rect x="12" y="12" width="7" height="7" rx="2" /></Svg></GridBox>
              Kontakt
            </MiniRow>
            <Rule $thin $m="9px 0 14px" />
            <MiniRow $gap={9}>
              <CallDot><Handset s={15} /></CallDot>
              <Lines><Tiny>would</Tiny>750-872-2913</Lines>
            </MiniRow>
            <Rule $thin $m="13px 0 0" />
          </MiniCard>
        </Sheet>
        <Island /><Clock>9:41</Clock>
        <Status>
          <svg width="34" height="9" viewBox="0 0 34 9" aria-hidden="true">
            <path d="M0 6h1.500v2H0zM2.500 4.500H4V8H2.500zM5 3h1.500v5H5zM7.500 1H9v7H7.500zM22 2h10v5H22zM33 3.500h1v2h-1z" />
            <path d="M12 3.500q4-3.500 8 0M13.500 5.500q2.500-2 5 0" fill="none" stroke="#000" strokeWidth="1.200" /><circle cx="16" cy="7.300" r="1" />
          </svg>
        </Status>
        <HomeBar />
      </Screen>
    </Device>
  );
}

const steps = [["Vyberte typ QR", 96], ["Přidat obsah", 82], ["Design QR kódu", 98], ["Stáhnout QR kód", 105]];
const palette = ["#527ac9", "#ebecf0", "#daeaf5", "#b69ddf", "#80bfa0", "#ecc373"];
const days = ["Pondělí", "Úterý", "Středa", "Čtvrtek", "Pátek", "Sobota", "Neděle"];

export default function App() {
  return (
    <>
      <Global />
      <TopBar>
        <TopInner>
          <Logo href="#"><LogoMark /><LogoText><LogoTop>Online</LogoTop>QR Generator</LogoText></Logo>
          <Steps>
            {steps.map(([name, w], i) => (
              <Step key={name} $on={i < 2}>
                <Dot $on={i < 2}>{i === 0 ? <Svg s={14} w={2.6} box="0 0 14 14"><path d="M2 7.500L5.500 11 12 3" /></Svg> : i + 1}</Dot>
                <StepName $w={w}>{name}</StepName>
                {i < 3 && <StepArrow color={i ? "#2a2035" : c.green} tip={i ? "#78808a" : c.green} />}
              </Step>
            ))}
          </Steps>
          <HelpButton type="button" aria-label="Nápověda"><ChatHelp /></HelpButton>
        </TopInner>
      </TopBar>

      <Wrap>
        <Column $pad="20px 0 0">
          <Title>2. Přidejte obsah do svého QR kódu</Title>
          <Card icon="design" title="Design" desc="Vyberte si pro svou webovou stránku barevné téma." open divider bottom={25}>
            <Body $pad="12px 14px 0">
              <Label as="p">Barevná paleta</Label>
              <PaletteBox>
                <Swatches>
                  {palette.map((p, i) => <Swatch key={p} type="button" $on={i === 0} aria-label={p} aria-pressed={i === 0}><SwatchColor $c={p} /></Swatch>)}
                </Swatches>
                <Label htmlFor="base-color">Základní barva</Label>
                <ColorRow>
                  <ColorChip type="button" aria-label="Upravit barvu"><Svg s={16} w={1.2} box="0 0 16 16"><path d="M9 2l-7 8-.5 4 3.500-.5 7-8c1-1.500-1.500-4.500-3-3.500zM8 4l3 3M9 15h6" stroke="#fff" /></Svg></ColorChip>
                  <ColorText id="base-color" defaultValue="#527AC9" />
                </ColorRow>
              </PaletteBox>
            </Body>
          </Card>
          <Card icon="info" title="Informace o restauraci" desc="Představte svou restauraci několika slovy." open cut="bottom" bottom={1}>
            <Body $pad="7px 14px 0">
              <ImagePicker />
              <Group><Field label="Název restaurace" value="Goodwin-Carr" grey /></Group>
              <Group $last>
                <Field label="Popis" grey>
                  {(id) => <TextArea id={id} defaultValue={"According fall have along. Pick bit either specific blue me identify.\nAgree hit our room president. Town old range mind. Bar sound center hundred nice."} />}
                </Field>
                <Counter>0 / 4000</Counter>
              </Group>
            </Body>
          </Card>
        </Column>
        <Side>
          <Toggle><ToggleItem type="button" $on>Náhled</ToggleItem><ToggleItem type="button">QR kód</ToggleItem></Toggle>
          <Preview />
        </Side>
      </Wrap>

      <ActionBar>
        <ActionInner>
          <NavButton type="button"><Arrow back />Zpět</NavButton>
          <NavButton type="button" $solid>Další<Arrow s={20} /></NavButton>
        </ActionInner>
      </ActionBar>

      <Wrap>
        <Column $pad="0 0 81px">
          <Card icon="doc" title="Jídelní lístek" desc="Uveďte informace o svém menu." star open cut="top" bottom={27}>
            <Rule $thin $m="9px 6px 24px" />
            <Body $pad="0 33px 0 26px">
              <Row>
                <Fold type="button" aria-label="Sbalit sekci"><Chevron /></Fold>
                <RowTitle>system</RowTitle>
                <Tool type="button" $red aria-label="Smazat sekci"><Bin /></Tool>
                <Tool type="button" $gap={9} aria-label="Posunout nahoru"><Chevron up s={18} w={1.6} /></Tool>
                <Tool type="button" $gap={5} aria-label="Posunout dolů"><Chevron s={18} w={1.6} /></Tool>
              </Row>
            </Body>
            <Body $pad="8px 33px 0">
              <Stack>
                <Field label="Název sekce" required value="system" />
                <Field label="Popis" value="Chance thing yourself billion recently PM citizen again. Join million use from." />
              </Stack>
            </Body>
            <Product>
              <Body $pad="0 31px 14px 18px">
                <Row>
                  <Fold type="button" $white aria-label="Sbalit produkt"><Chevron /></Fold>
                  <RowTitle>future</RowTitle>
                  <MiniTools>
                    <Mini type="button" aria-label="Nahoru"><Chevron up w={1.7} /></Mini><Bar />
                    <Mini type="button" aria-label="Dolů"><Chevron w={1.7} /></Mini><Bar />
                    <Mini type="button" $red aria-label="Smazat produkt"><Bin s={17} /></Mini>
                  </MiniTools>
                </Row>
              </Body>
              <Body $pad="0 21px 0 32px">
                <ImagePicker dashed />
                <Stack>
                  <Pair><Field label="Název" required value="future" /><Field label="Přeložený název (volitelné)" value="vote" /></Pair>
                  <Field label="Popis" value="Act method traditional. Will firm grow manager month song." />
                  <Field label="Cena (volitelné)" value="70" />
                  <div>
                    <Label as="p">Alergeny</Label>
                    <Allergens>
                      {[allergens.slice(0, 7), allergens.slice(7)].map((row, r) => (
                        <AllergenRow key={r}>
                          {row.map(([name, bg, art]) => (
                            <Tile key={name} type="button" aria-label={name} aria-pressed={name === "Hořčice"} $on={name === "Hořčice"}><Allergen bg={bg}>{art}</Allergen></Tile>
                          ))}
                        </AllergenRow>
                      ))}
                    </Allergens>
                  </div>
                </Stack>
              </Body>
            </Product>
            <Flow>
              <AddButton type="button" $m="15px 36px 23px"><PlusSquare />Přidat produkt</AddButton>
              <Rule $thin $m="0 6px 22px" />
              <AddButton type="button" $m="0 33px"><PlusSquare />Přidat sekci</AddButton>
            </Flow>
          </Card>

          <Card icon="clock" title="Otevírací doba" desc="Provozní doba pro každý den v týdnu." open divider bottom={16}>
            <Days>
              {days.map((d, i) => (
                <Day key={d}>
                  <DayName><Check type="checkbox" />{d}</DayName>
                  <Time label={`${d} od`} value={i ? "12:30" : "08:00"} set={!i} />
                  <Time label={`${d} do`} value={i ? "12:30" : "09:00"} set={!i} />
                  <PlusBox type="button" aria-label="Přidat čas"><Plus s={15} w={1.7} /></PlusBox>
                </Day>
              ))}
            </Days>
          </Card>

          <Card icon="info" title="Kontaktní údaje" desc="Uveďte kontaktní údaje." open divider bottom={38}>
            <Panels>
              <Panel>
                <Row><PanelTitle>Přidat telefon</PanelTitle><GreenPlus type="button" aria-label="Přidat telefon"><Plus w={1.8} /></GreenPlus></Row>
                <Rule $thin $m="13px 5px 0 0" />
                <PhoneRow>
                  <Field label="Štítek (volltelný)" value="would" grey small />
                  <NumberField>
                    <NumberLabels><Label htmlFor="tel-icon" $small $grey>Ikona</Label><Label htmlFor="tel-number" $small $grey>Telefonní číslo</Label></NumberLabels>
                    <NumberBox>
                      <IconPick type="button" id="tel-icon"><Handset /><Chevron s={12} w={1.6} /></IconPick>
                      <Bare id="tel-number" type="tel" defaultValue="750-872-2913" />
                    </NumberBox>
                  </NumberField>
                  <BinButton type="button" $red aria-label="Smazat telefon"><Bin /></BinButton>
                </PhoneRow>
              </Panel>
              <Panel><Row><PanelTitle>Přidat e-mail</PanelTitle><GreenPlus type="button" aria-label="Přidat e-mail"><Plus w={1.8} /></GreenPlus></Row></Panel>
              <Panel><Row><PanelTitle>Přidat webové stránky</PanelTitle><GreenPlus type="button" aria-label="Přidat web"><Plus w={1.8} /></GreenPlus></Row></Panel>
            </Panels>
          </Card>

          <Card icon="globe" title="Sociální sítě" desc="Přidejte si na svou stránku odkazy na sociální sítě." open divider bottom={23}>
            <SocialGrid>
              {socials.map(([name, art]) => <SocialTile key={name} type="button" aria-label={name}>{art}</SocialTile>)}
            </SocialGrid>
          </Card>

          <Card icon="font" title="Písmo" desc="Vytvořte si jedinečnou stránku pomocí originálních fontů." />
          <Card icon="smile" title="Úvodní obrazovka" desc="Zobrazení obrázku během načítání stránky." />
          <Card icon="qr" title="Název QR kódu" desc="Pojmenujte svůj QR kód." />
          <Card icon="lock" title="Heslo" help />
        </Column>
      </Wrap>
    </>
  );
}
